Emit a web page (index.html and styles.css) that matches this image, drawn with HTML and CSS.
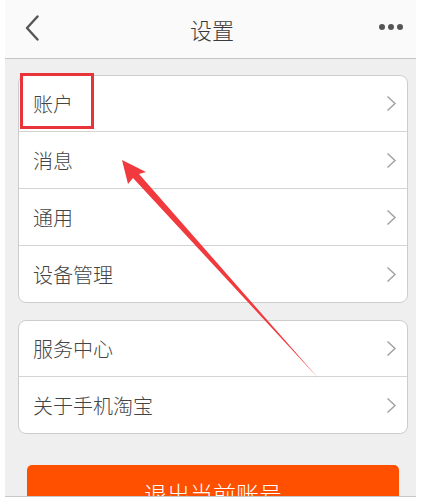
FILE: index.html
```html
<!DOCTYPE html>
<html lang="zh-CN">

<head>
    <meta charset="UTF-8">
    <meta name="viewport" content="width=device-width, initial-scale=1.0">
    <title>设置</title>
    <link rel="stylesheet" href="styles.css">
</head>

<body>
    <div class="screen">
        <!-- Header -->
        <header class="topbar">
            <svg class="back" width="14" height="26" viewBox="0 0 14 26">
                <polyline points="12.5,1.5 2,13 12.5,24.5" fill="none" stroke="#555" stroke-width="2.4" stroke-linecap="round" stroke-linejoin="round"/>
            </svg>
            <h1 class="title">设置</h1>
            <div class="more">
                <span></span><span></span><span></span>
            </div>
        </header>

        <!-- Settings groups -->
        <ul class="group">
            <li class="row">账户<svg class="chev" width="11" height="17" viewBox="0 0 11 17"><polyline points="1.5,1.5 9,8.5 1.5,15.5" fill="none" stroke="#a3a3a3" stroke-width="1.5"/></svg></li>
            <li class="row">消息<svg class="chev" width="11" height="17" viewBox="0 0 11 17"><polyline points="1.5,1.5 9,8.5 1.5,15.5" fill="none" stroke="#a3a3a3" stroke-width="1.5"/></svg></li>
            <li class="row">通用<svg class="chev" width="11" height="17" viewBox="0 0 11 17"><polyline points="1.5,1.5 9,8.5 1.5,15.5" fill="none" stroke="#a3a3a3" stroke-width="1.5"/></svg></li>
            <li class="row">设备管理<svg class="chev" width="11" height="17" viewBox="0 0 11 17"><polyline points="1.5,1.5 9,8.5 1.5,15.5" fill="none" stroke="#a3a3a3" stroke-width="1.5"/></svg></li>
        </ul>

        <ul class="group second">
            <li class="row">服务中心<svg class="chev" width="11" height="17" viewBox="0 0 11 17"><polyline points="1.5,1.5 9,8.5 1.5,15.5" fill="none" stroke="#a3a3a3" stroke-width="1.5"/></svg></li>
            <li class="row">关于手机淘宝<svg class="chev" width="11" height="17" viewBox="0 0 11 17"><polyline points="1.5,1.5 9,8.5 1.5,15.5" fill="none" stroke="#a3a3a3" stroke-width="1.5"/></svg></li>
        </ul>

        <button class="logout">退出当前账号</button>
    </div>

    <!-- Annotation -->
    <div class="mark-box"></div>
    <svg class="mark-arrow" width="424" height="499" viewBox="0 0 424 499">
        <polygon points="122,160 146,172 139,174 319,379 133,178 128,184" fill="#f03a3e"/>
    </svg>
</body>

</html>
```

FILE: styles.css
```css
/* Base styles */
body {
    margin: 0;
    padding: 0;
    background-color: #fff;
    font-family: "Noto Sans CJK SC", "Noto Sans", sans-serif;
    font-weight: 300;
    color: #333;
}

.screen {
    margin-left: 5px;
    width: 411px;
    height: 496px;
    background-color: #efefef;
    border-bottom: 1px solid #c8c8c8;
    overflow: hidden;
}

/* Header */
.topbar {
    height: 58px;
    background-color: #fafafa;
    border-bottom: 1px solid #c4c4c4;
    display: flex;
    align-items: center;
    justify-content: space-between;
    padding: 0 13px 0 20px;
}

.back {
    display: block;
    margin-top: -2px;
}

.title {
    margin: 0 0 0 6px;
    font-size: 22px;
    font-weight: 300;
    color: #3a3a3a;
}

.more {
    display: flex;
    gap: 3px;
    margin-top: -4px;
}

.more span {
    width: 6px;
    height: 6px;
    border-radius: 50%;
    background-color: #555;
}

/* Groups */
.group {
    list-style: none;
    margin: 16px 8px 0 13px;
    padding: 0;
    background-color: #fff;
    border: 1px solid #cdcdcd;
    border-radius: 8px;
}

.group.second {
    margin-top: 17px;
}

.row {
    height: 56px;
    display: flex;
    align-items: center;
    justify-content: space-between;
    padding: 0 10px 0 14px;
    font-size: 20px;
    color: #444;
}

.row:first-child {
    height: 55px;
}

.row + .row {
    border-top: 1px solid #d4d4d4;
}

.chev {
    display: block;
}

/* Logout button */
.logout {
    display: block;
    margin: 31px 0 0 22px;
    width: 372px;
    height: 48px;
    border: none;
    border-radius: 5px;
    background-color: #ff5000;
    color: #fff;
    font-family: "Noto Sans CJK SC", sans-serif;
    font-weight: 300;
    font-size: 23px;
    padding: 8px 0 0;
    line-height: 30px;
}

/* Annotation overlay */
.mark-box {
    position: absolute;
    left: 20px;
    top: 73px;
    width: 68px;
    height: 50px;
    border: 3px solid #e8333b;
}

.mark-arrow {
    position: absolute;
    left: 0;
    top: 0;
    pointer-events: none;
}
```
